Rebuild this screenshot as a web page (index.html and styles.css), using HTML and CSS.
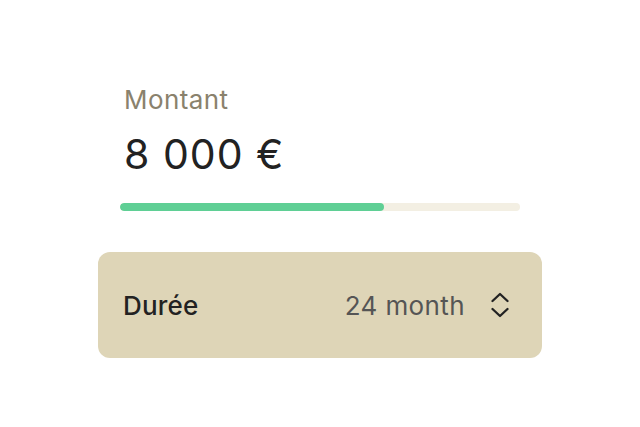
FILE: index.html
```html
<!DOCTYPE html>
<html lang="fr">
<head>
<meta charset="utf-8">
<link rel="stylesheet" href="styles.css">
</head>
<body>
<main class="wrap">
  <section class="amount">
    <div class="label">Montant</div>
    <div class="value">8 000 €</div>
    <div class="track"><div class="fill" style="width: 66%"></div></div>
  </section>
  <section class="card">
    <span class="card-label">Durée</span>
    <span class="card-right">
      <span class="card-value">24 month</span>
      <svg class="chev" width="18" height="28" viewBox="0 0 18 28" fill="none" stroke="#222" stroke-width="2.3" stroke-linecap="round" stroke-linejoin="round">
        <path d="M1.5 10 L9 3 L16.5 10"/>
        <path d="M1.5 18 L9 25 L16.5 18"/>
      </svg>
    </span>
  </section>
</main>
</body>
</html>
```
FILE: styles.css
```css
html, body {
  margin: 0;
  background: #ffffff;
}
body {
  font-family: Inter, "Noto Sans", sans-serif;
}
.wrap {
  width: 444px;
  margin: 0 auto;
  padding-top: 85px;
  display: flex;
  flex-direction: column;
  gap: 41px;
}
.amount {
  padding: 0 22px;
  display: flex;
  flex-direction: column;
}
.label {
  padding-left: 4px;
  font-size: 26px;
  line-height: 30px;
  letter-spacing: 0.4px;
  color: #8a826d;
}
.value {
  padding-left: 4px;
  margin-top: 15px;
  font-size: 41px;
  line-height: 48px;
  letter-spacing: 1px;
  color: #222222;
}
.track {
  margin-top: 25px;
  height: 8px;
  border-radius: 4px;
  background: #f3efe3;
  overflow: hidden;
}
.fill {
  height: 100%;
  border-radius: 4px;
  background: #5fcf95;
}
.card {
  height: 106px;
  box-sizing: border-box;
  padding: 0 33px 0 25px;
  border-radius: 12px;
  background: #ded5b7;
  display: flex;
  align-items: center;
  justify-content: space-between;
}
.card-label {
  font-size: 26px;
  font-weight: 500;
  letter-spacing: 0.2px;
  color: #222222;
}
.card-right {
  display: flex;
  align-items: center;
  gap: 26px;
}
.card-value {
  font-size: 26px;
  letter-spacing: 0.4px;
  color: #555555;
}
.chev {
  display: block;
}
```
